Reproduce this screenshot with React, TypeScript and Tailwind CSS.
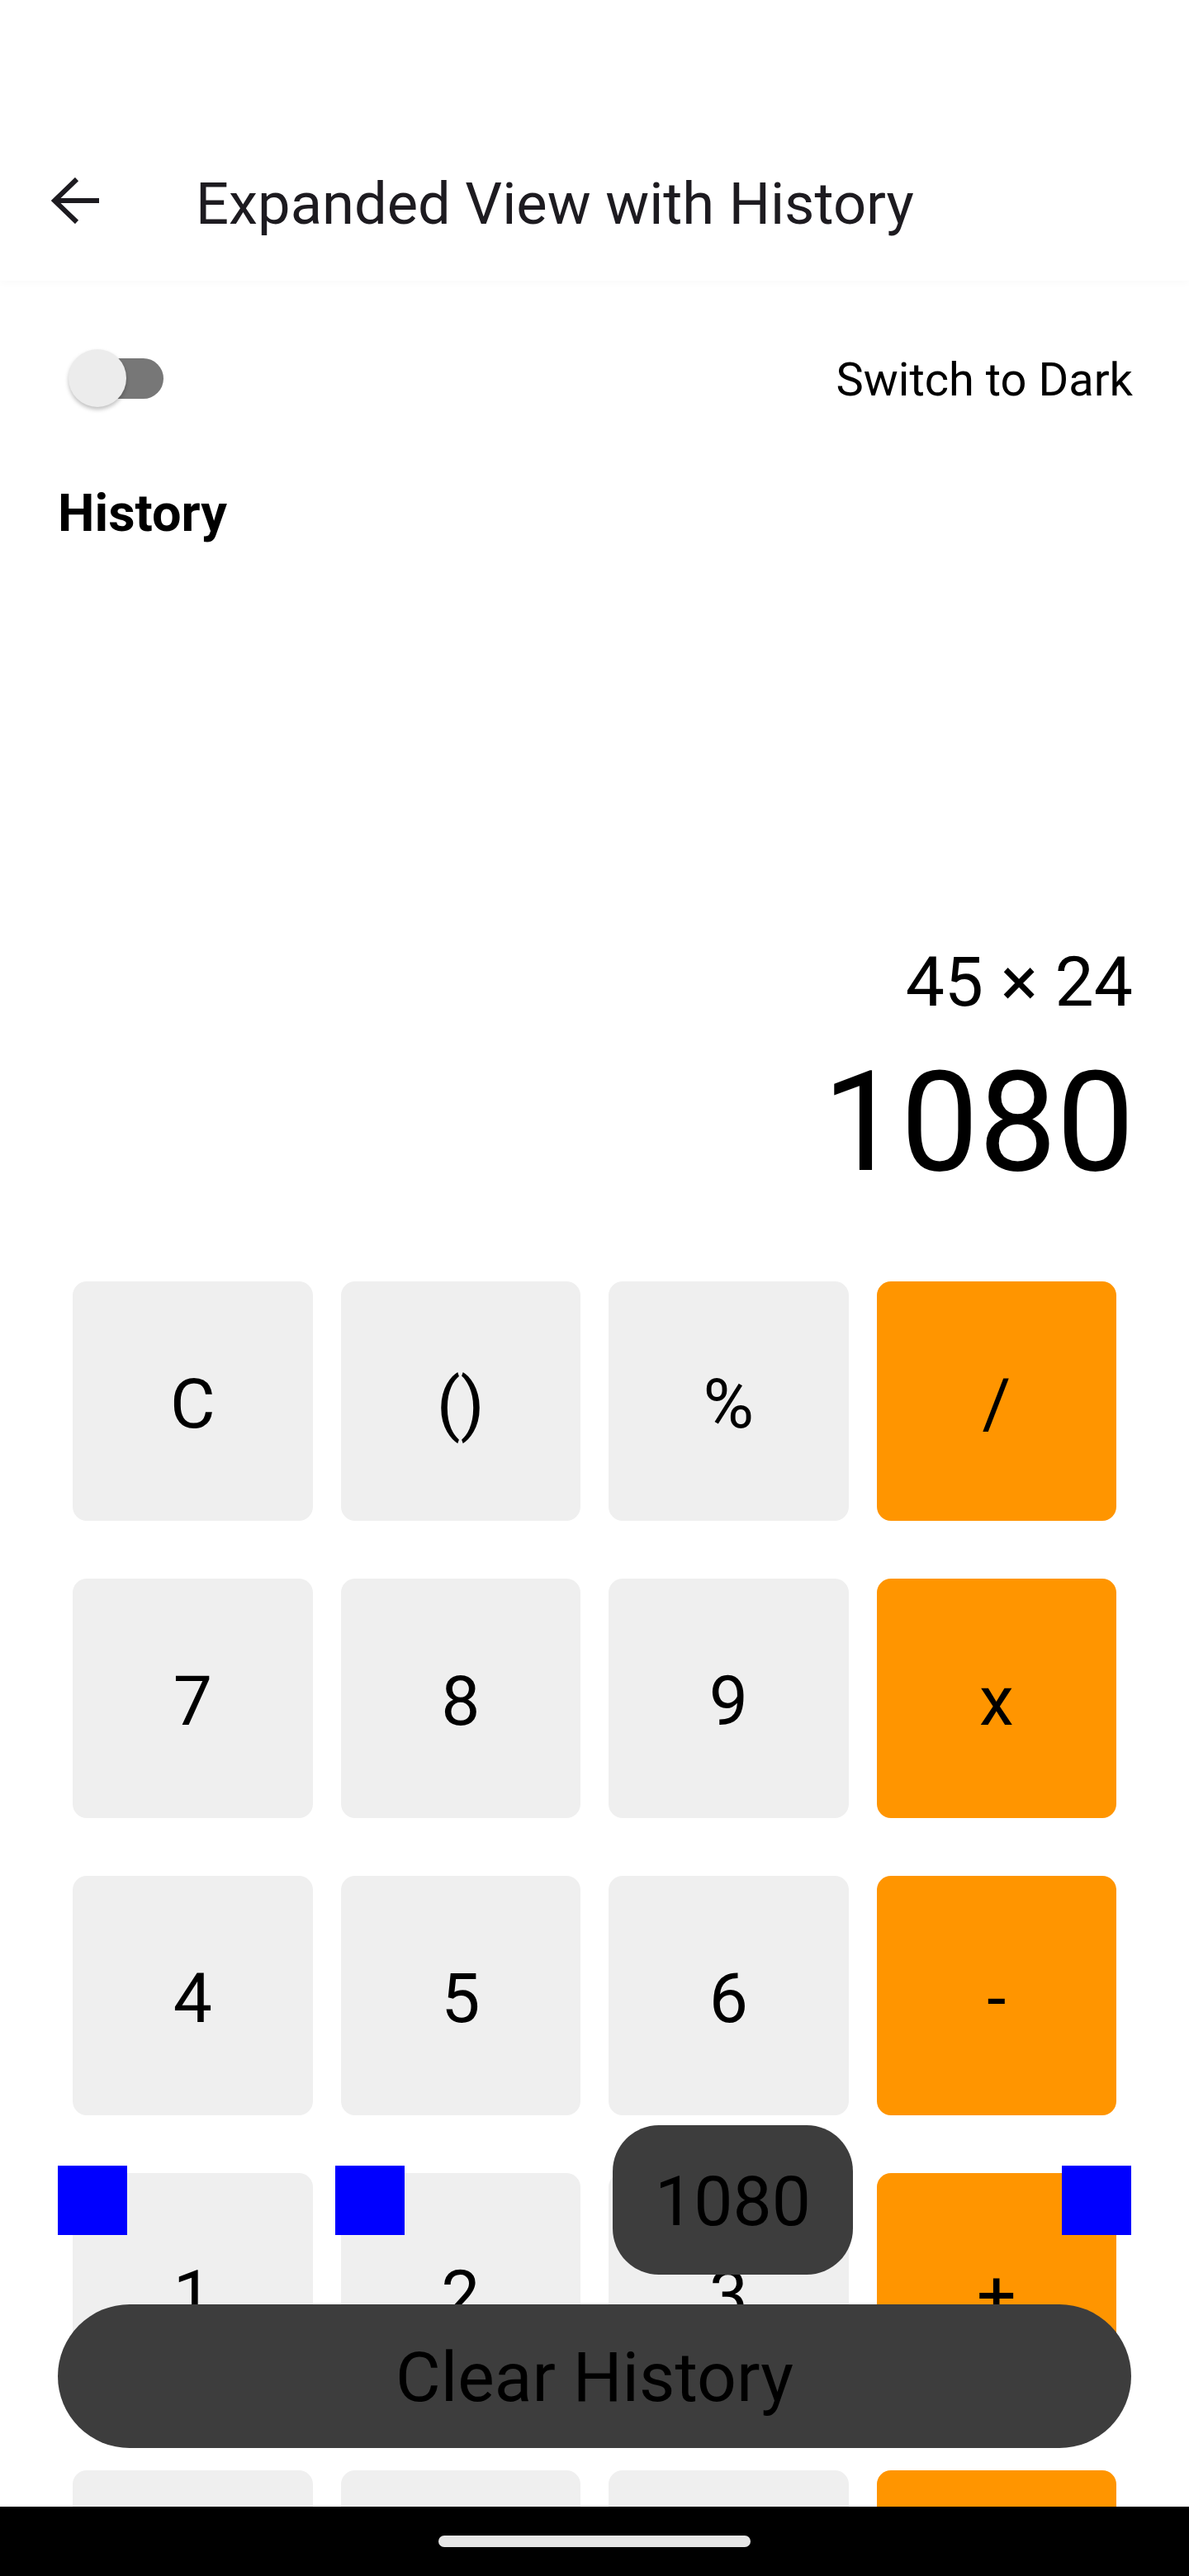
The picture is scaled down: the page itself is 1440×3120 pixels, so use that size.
const keys: { label: string; accent?: boolean }[] = [
  { label: 'C' },
  { label: '()' },
  { label: '%' },
  { label: '/', accent: true },
  { label: '7' },
  { label: '8' },
  { label: '9' },
  { label: 'x', accent: true },
  { label: '4' },
  { label: '5' },
  { label: '6' },
  { label: '-', accent: true },
  { label: '1' },
  { label: '2' },
  { label: '3' },
  { label: '+', accent: true },
  // last row sits under the nav bar, labels never show
  { label: '' },
  { label: '' },
  { label: '' },
  { label: '', accent: true },
];

function BackArrow() {
  return (
    <svg width="60" height="56" viewBox="0 0 60 56" className="mt-[3px] ml-[62px] shrink-0">
      <path d="M31 2 L4 28 L31 54 M4 28 H58" fill="none" stroke="#1d1b20" strokeWidth="6" />
    </svg>
  );
}

function Toggle() {
  return (
    <div className="relative w-[115px] h-[70px]">
      <div className="absolute right-0 top-[10.5px] w-[112px] h-[49px] rounded-full bg-[#777777]" />
      <div className="absolute left-0 top-0 w-[70px] h-[70px] rounded-full bg-[#ececec] shadow-[0_3px_5px_rgba(0,0,0,0.25)]" />
    </div>
  );
}

export default function App() {
  return (
    <div className="relative w-[1440px] h-[3120px] overflow-hidden bg-white font-['Roboto',sans-serif] text-black">
      <header className="relative z-10 h-[340px] bg-white shadow-[0_4px_8px_rgba(0,0,0,0.02)]">
        <div className="flex items-start pt-[212px]">
          <BackArrow />
          <h1 className="ml-[115px] text-[70.5px] leading-none text-[#1d1b20]">Expanded View with History</h1>
        </div>
      </header>

      <div className="flex items-center justify-between pt-[83px] pl-[83px] pr-[68px]">
        <Toggle />
        <span className="mt-[3px] text-[56px] leading-none">Switch to Dark</span>
      </div>

      <h2 className="mt-[97px] pl-[70px] text-[63px] font-bold leading-none">History</h2>

      <div className="mt-[495px] pr-[68px] text-right text-[84px] leading-none">45 × 24</div>
      <div className="mt-[44px] pr-[66px] text-right text-[168px] leading-none">1080</div>

      <div className="mt-[108px] grid grid-cols-4 gap-x-[34px] gap-y-[70px] px-[88px]">
        {keys.map((k, i) => (
          <div
            key={i}
            className={`flex h-[290px] items-center justify-center rounded-[17px] pt-[8px] text-[84px] leading-none ${
              k.accent ? 'bg-[#ff9500]' : 'bg-[#efefef]'
            }`}
          >
            {k.label}
          </div>
        ))}
      </div>

      {/* overlays */}
      <div className="absolute left-[70px] top-[2623px] h-[84px] w-[84px] bg-[#0000ff]" />
      <div className="absolute left-[406px] top-[2623px] h-[84px] w-[84px] bg-[#0000ff]" />
      <div className="absolute left-[1286px] top-[2623px] h-[84px] w-[84px] bg-[#0000ff]" />

      <div className="absolute left-[742px] top-[2574px] flex h-[181px] w-[291px] items-center justify-center rounded-[56px] bg-[#3d3d3d] pt-[4px] text-[84px] leading-none">
        1080
      </div>

      <div className="absolute left-[70px] top-[2791px] flex h-[174px] w-[1300px] items-center justify-center rounded-full bg-[#3d3d3d] pt-[4px] text-[84px] leading-none text-black">
        Clear History
      </div>

      <div className="absolute bottom-0 left-0 flex h-[84px] w-full items-center justify-center bg-black">
        <div className="h-[14px] w-[378px] rounded-full bg-[#e6e6e6]" />
      </div>
    </div>
  );
}
